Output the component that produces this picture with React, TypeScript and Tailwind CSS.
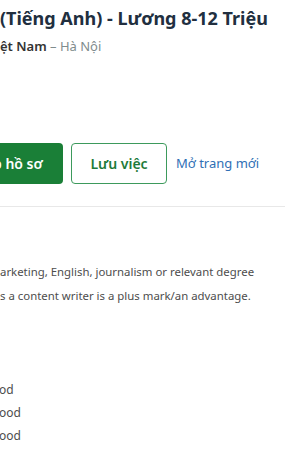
import React from "react";

export default function App() {
  const font = { fontFamily: '"Noto Sans", "Open Sans", sans-serif' };
  return (
    <div className="w-[285px] h-[450px] overflow-hidden bg-white" style={font}>
      <div className="flex flex-col">
        <div className="pt-[6px] leading-[24px] text-[18px] font-bold text-[#212f3f] whitespace-nowrap">
          (Tiếng Anh) - Lương 8-12 Triệu
        </div>
        <div className="mt-[6px] leading-[20px] text-[13px] whitespace-nowrap">
          <span className="font-semibold text-[#333]">ệt Nam</span>
          <span className="text-[#7f8c8d]"> – Hà Nội</span>
        </div>
        <div className="mt-[87px] flex items-center gap-[8px] ml-[-47px]">
          <button className="w-[110px] h-[41px] rounded-[4px] bg-[#1a7f37] text-white text-[14px] font-semibold whitespace-nowrap">
            Nộp hồ sơ
          </button>
          <button className="w-[96px] h-[41px] rounded-[4px] border border-[#3d9a5c] text-[#1d7a3a] text-[14px] font-semibold bg-white">
            Lưu việc
          </button>
          <span className="ml-[1px] text-[13px] text-[#2f6fb5] whitespace-nowrap">Mở trang mới</span>
        </div>
        <div className="mt-[22px] h-[1px] bg-[#e8e8e8]" />
        <div className="mt-[53px] flex flex-col text-[11.4px] leading-[24px] text-[#4d4d4d] whitespace-nowrap">
          <div>arketing, English, journalism or relevant degree</div>
          <div>s a content writer is a plus mark/an advantage.</div>
        </div>
        <div className="mt-[70px] flex flex-col text-[12px] leading-[23px] text-[#4d4d4d] whitespace-nowrap">
          <div className="ml-[-1px]">od</div>
          <div className="ml-[-1px]">ood</div>
          <div className="ml-[-1px]">ood</div>
        </div>
      </div>
    </div>
  );
}
